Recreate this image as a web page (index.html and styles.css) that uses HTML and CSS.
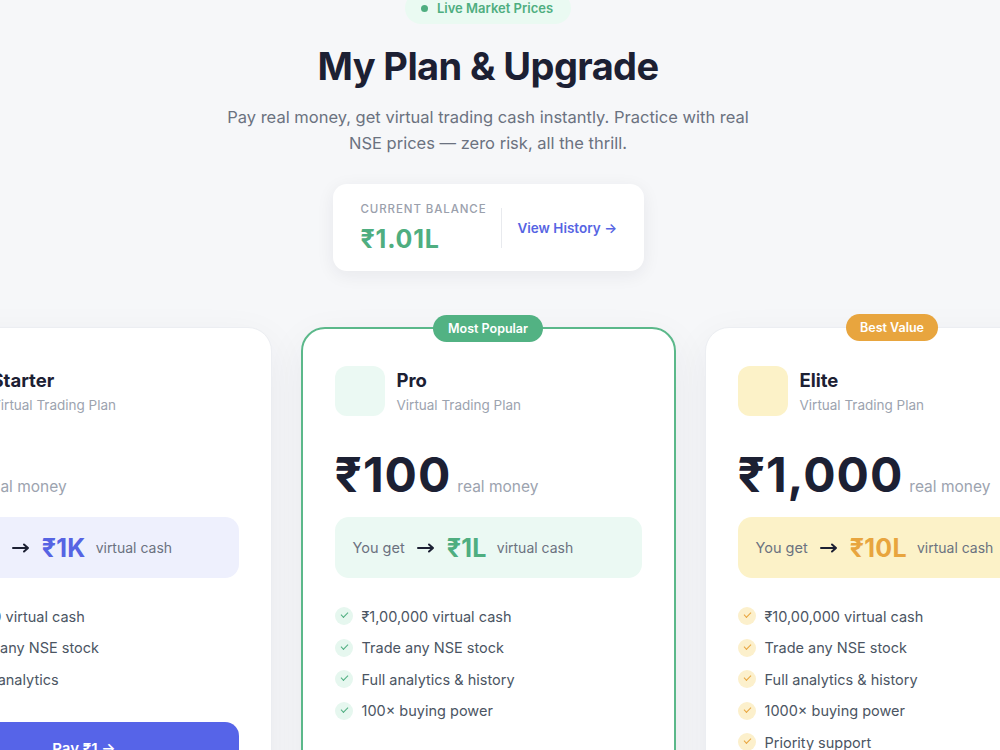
FILE: index.html
```html
<!DOCTYPE html>
<html lang="en">
<head>
<meta charset="utf-8">
<title>My Plan &amp; Upgrade</title>
<link rel="stylesheet" href="styles.css">
</head>
<body>
<main class="page">
  <header class="hero">
    <div class="live-pill"><span class="live-dot"></span>Live Market Prices</div>
    <h1 class="hero-title">My Plan &amp; Upgrade</h1>
    <p class="hero-sub">Pay real money, get virtual trading cash instantly. Practice with real NSE prices — zero risk, all the thrill.</p>
    <div class="balance-card">
      <div class="balance-info">
        <div class="balance-label">Current Balance</div>
        <div class="balance-value">₹1.01L</div>
      </div>
      <div class="balance-divider"></div>
      <a class="balance-link" href="#">View History →</a>
    </div>
  </header>

  <section class="plans">
    <article class="plan plan-starter">
      <div class="plan-head">
        <div class="plan-icon"></div>
        <div class="plan-names">
          <div class="plan-name">Starter</div>
          <div class="plan-kind">Virtual Trading Plan</div>
        </div>
      </div>
      <div class="plan-price"><span class="price-amount">₹1</span><span class="price-note">real money</span></div>
      <div class="plan-get">
        <span class="get-label">You get</span>
        <svg class="get-arrow" viewBox="0 0 18 10" width="18" height="10"><path d="M1 5h15M12 1.5 16 5l-4 3.5" fill="none" stroke="currentColor" stroke-width="2" stroke-linecap="round" stroke-linejoin="round"/></svg>
        <span class="get-amount">₹1K</span>
        <span class="get-note">virtual cash</span>
      </div>
      <ul class="plan-features">
        <li><span class="check"></span>₹1,000 virtual cash</li>
        <li><span class="check"></span>Trade any NSE stock</li>
        <li><span class="check"></span>Basic analytics</li>
      </ul>
      <button class="plan-btn">Pay ₹1 →</button>
    </article>

    <article class="plan plan-pro">
      <span class="plan-badge">Most Popular</span>
      <div class="plan-head">
        <div class="plan-icon"></div>
        <div class="plan-names">
          <div class="plan-name">Pro</div>
          <div class="plan-kind">Virtual Trading Plan</div>
        </div>
      </div>
      <div class="plan-price"><span class="price-amount">₹100</span><span class="price-note">real money</span></div>
      <div class="plan-get">
        <span class="get-label">You get</span>
        <svg class="get-arrow" viewBox="0 0 18 10" width="18" height="10"><path d="M1 5h15M12 1.5 16 5l-4 3.5" fill="none" stroke="currentColor" stroke-width="2" stroke-linecap="round" stroke-linejoin="round"/></svg>
        <span class="get-amount">₹1L</span>
        <span class="get-note">virtual cash</span>
      </div>
      <ul class="plan-features">
        <li><span class="check"></span>₹1,00,000 virtual cash</li>
        <li><span class="check"></span>Trade any NSE stock</li>
        <li><span class="check"></span>Full analytics &amp; history</li>
        <li><span class="check"></span>100× buying power</li>
      </ul>
      <button class="plan-btn">Pay ₹100 →</button>
    </article>

    <article class="plan plan-elite">
      <span class="plan-badge">Best Value</span>
      <div class="plan-head">
        <div class="plan-icon"></div>
        <div class="plan-names">
          <div class="plan-name">Elite</div>
          <div class="plan-kind">Virtual Trading Plan</div>
        </div>
      </div>
      <div class="plan-price"><span class="price-amount">₹1,000</span><span class="price-note">real money</span></div>
      <div class="plan-get">
        <span class="get-label">You get</span>
        <svg class="get-arrow" viewBox="0 0 18 10" width="18" height="10"><path d="M1 5h15M12 1.5 16 5l-4 3.5" fill="none" stroke="currentColor" stroke-width="2" stroke-linecap="round" stroke-linejoin="round"/></svg>
        <span class="get-amount">₹10L</span>
        <span class="get-note">virtual cash</span>
      </div>
      <ul class="plan-features">
        <li><span class="check"></span>₹10,00,000 virtual cash</li>
        <li><span class="check"></span>Trade any NSE stock</li>
        <li><span class="check"></span>Full analytics &amp; history</li>
        <li><span class="check"></span>1000× buying power</li>
        <li><span class="check"></span>Priority support</li>
      </ul>
      <button class="plan-btn">Pay ₹1,000 →</button>
    </article>
  </section>
</main>
</body>
</html>
```

FILE: styles.css
```css
html, body {
  margin: 0;
  padding: 0;
  overflow: hidden;
}

body {
  background: #f6f7f9;
  font-family: Inter, "Noto Sans", sans-serif;
  color: #1c2033;
}

.page {
  width: 976px;
}

/* ---------- header ---------- */
.hero {
  display: flex;
  flex-direction: column;
  align-items: center;
  margin-top: -8px;
}

.live-pill {
  display: flex;
  align-items: center;
  gap: 9px;
  height: 32px;
  padding: 0 18px 0 16px;
  border-radius: 16px;
  background: #eafaf2;
  color: #4fae80;
  font-size: 13px;
  font-weight: 600;
}

.live-dot {
  width: 7px;
  height: 7px;
  border-radius: 50%;
  background: #4fae80;
}

.hero-title {
  margin: 17px 0 0;
  font-size: 38px;
  line-height: 50px;
  font-weight: 700;
  letter-spacing: -0.6px;
  color: #1c2033;
}

.hero-sub {
  margin: 13px 0 0;
  width: 545px;
  text-align: center;
  font-size: 16.5px;
  line-height: 26px;
  color: #6b7280;
}

.balance-card {
  margin-top: 28px;
  display: flex;
  align-items: center;
  width: 311px;
  height: 87px;
  box-sizing: border-box;
  padding: 0 28px;
  background: #fff;
  border-radius: 14px;
  box-shadow: 0 4px 18px rgba(25, 35, 60, 0.07);
  white-space: nowrap;
}

.balance-info {
  flex: 0 0 auto;
  display: flex;
  flex-direction: column;
}

.balance-label {
  font-size: 11.5px;
  font-weight: 500;
  letter-spacing: 0.9px;
  text-transform: uppercase;
  color: #9aa0ac;
  line-height: 16px;
}

.balance-value {
  margin-top: 6px;
  font-size: 25px;
  font-weight: 700;
  line-height: 32px;
  letter-spacing: 0.8px;
  color: #4fae80;
}

.balance-divider {
  flex: 0 0 1px;
  height: 40px;
  margin: 0 15px;
  background: #e8eaee;
}

.balance-link {
  flex: 0 0 auto;
  font-size: 13.5px;
  font-weight: 600;
  color: #5664e3;
  text-decoration: none;
}

/* ---------- plans ---------- */
.plans {
  display: flex;
  justify-content: center;
  align-items: flex-start;
  gap: 29px;
  margin-top: 56px;
}

.plan {
  position: relative;
  flex: 0 0 375px;
  box-sizing: border-box;
  padding: 38px 32px 40px;
  background: #fff;
  border: 1px solid #eceef2;
  border-radius: 24px;
  box-shadow: 0 12px 40px rgba(25, 35, 60, 0.06);
}

.plan-pro {
  border: 2px solid #5bb88a;
  padding: 37px 32px 40px;
}

.plan-badge {
  position: absolute;
  top: -14px;
  left: 50%;
  transform: translateX(-50%);
  height: 27px;
  line-height: 27px;
  padding: 0 15px;
  border-radius: 14px;
  color: #fff;
  font-size: 12.5px;
  font-weight: 600;
  white-space: nowrap;
}

.plan-pro .plan-badge { background: #52b283; }
.plan-elite .plan-badge { background: #e8a53e; padding: 0 14px; }

.plan-head {
  display: flex;
  align-items: flex-start;
  gap: 12px;
}

.plan-icon {
  width: 50px;
  height: 50px;
  border-radius: 12px;
}

.plan-starter .plan-icon { background: #eef0fd; }
.plan-pro .plan-icon { background: #ebf9f3; }
.plan-elite .plan-icon { background: #fcf2c8; }

.plan-names {
  padding-top: 2px;
}

.plan-name {
  font-size: 18.5px;
  font-weight: 700;
  line-height: 24px;
  color: #1c2033;
}

.plan-kind {
  margin-top: 3px;
  font-size: 13.5px;
  line-height: 20px;
  color: #9ca3af;
}

.plan-price {
  display: flex;
  align-items: baseline;
  gap: 6px;
  margin-top: 35px;
}

.price-amount {
  font-size: 48px;
  font-weight: 700;
  line-height: 48px;
  letter-spacing: 1px;
  color: #1c2033;
}

.price-note {
  font-size: 15.5px;
  color: #9ca3af;
}

.plan-get {
  display: flex;
  align-items: center;
  height: 61px;
  margin-top: 18px;
  padding: 0 18px;
  border-radius: 14px;
}

.plan-starter .plan-get { background: #eef0fd; }
.plan-pro .plan-get { background: #ebf9f3; }
.plan-elite .plan-get { background: #fcf2c8; }

.get-label {
  font-size: 14.5px;
  color: #6b7280;
}

.get-arrow {
  flex: 0 0 18px;
  margin: 0 12px 0 12px;
  color: #1c2033;
}

.get-amount {
  font-size: 25px;
  font-weight: 700;
  margin-right: 10px;
  letter-spacing: 0.3px;
}

.plan-starter .get-amount { color: #5664e3; }
.plan-pro .get-amount { color: #4fae80; }
.plan-elite .get-amount { color: #e8a53e; }

.get-note {
  font-size: 14px;
  color: #6b7280;
}

.plan-features {
  list-style: none;
  margin: 27px 0 0;
  padding: 0;
  display: flex;
  flex-direction: column;
  gap: 9.5px;
}

.plan-features li {
  display: flex;
  align-items: center;
  gap: 9px;
  height: 22px;
  font-size: 14.5px;
  color: #4b5563;
}

.check {
  position: relative;
  flex: 0 0 18px;
  height: 18px;
  border-radius: 50%;
}

.check::after {
  content: "";
  position: absolute;
  left: 6px;
  top: 5px;
  width: 6px;
  height: 3px;
  border-left: 1.8px solid currentColor;
  border-bottom: 1.8px solid currentColor;
  transform: rotate(-45deg);
}

.plan-starter .check { background: #eef0fd; color: #5664e3; }
.plan-pro .check { background: #e6f7ef; color: #4fae80; }
.plan-elite .check { background: #fcf0cc; color: #e8a53e; }

.plan-btn {
  display: block;
  width: 100%;
  height: 52px;
  margin-top: 32px;
  border: 0;
  border-radius: 14px;
  background: #5664e8;
  color: #fff;
  font-family: inherit;
  font-size: 15px;
  font-weight: 600;
}

.plan-pro .plan-btn { background: #52b283; }
.plan-elite .plan-btn { background: #e8a53e; }
```
